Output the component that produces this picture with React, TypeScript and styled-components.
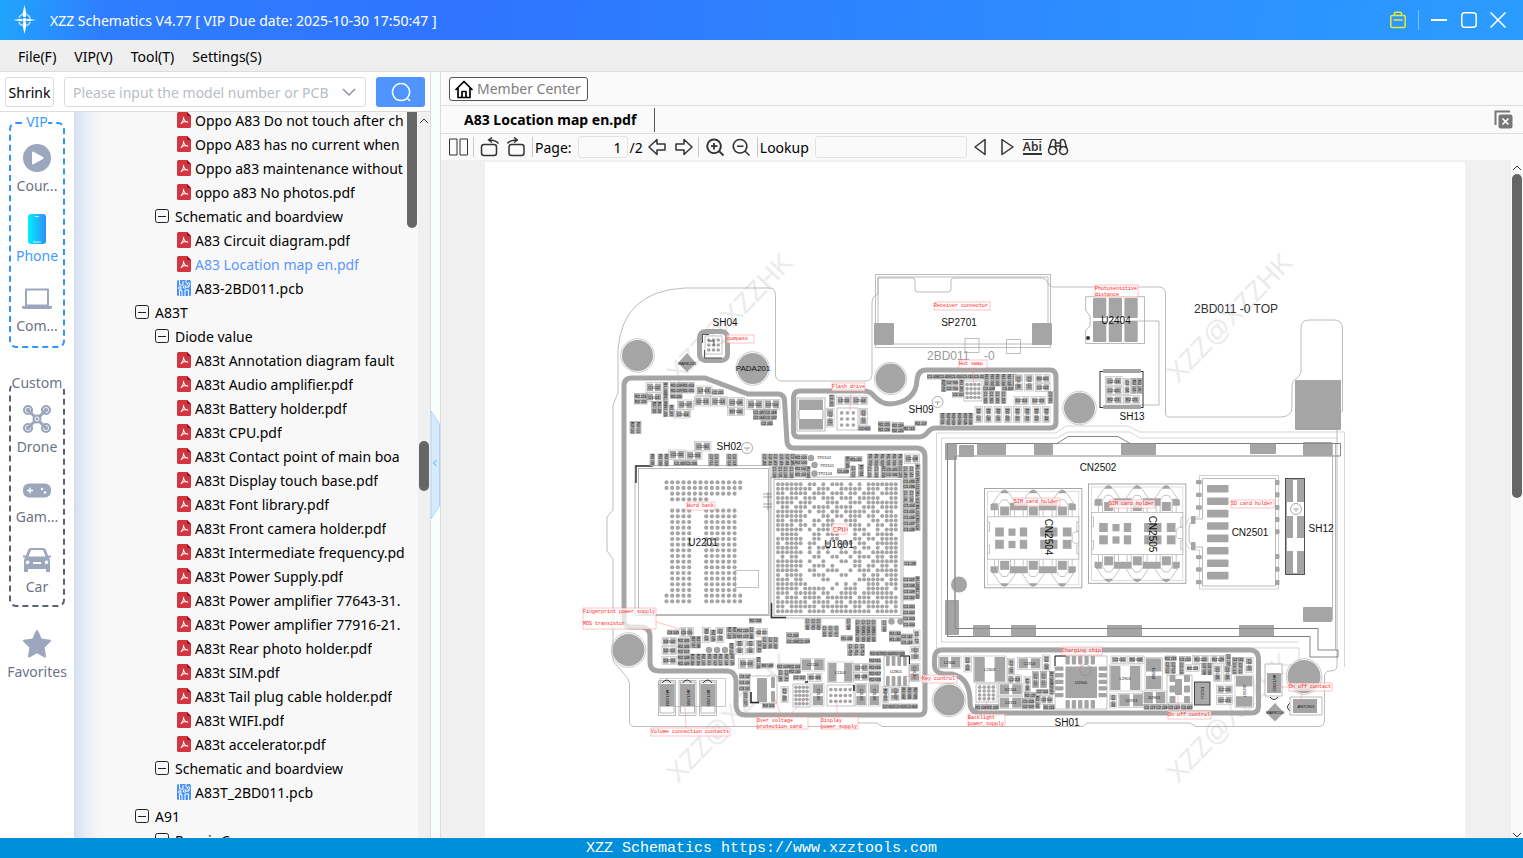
import React from "react";
import styled, { createGlobalStyle, css } from "styled-components";

const GlobalStyle = createGlobalStyle`
  * { box-sizing: border-box; }
  body { margin: 0; background: #fff; }
  body, button, input, select { font-family: "Noto Sans", "Open Sans", sans-serif; font-size: 14px; }
  button { cursor: pointer; }
`;

const ui = {
  line: "#dcdcdc",
  panel: "#fafafa",
  blue: "#4f94ff",
  railIcon: "#9ca6bd",
  railText: "#6c7383",
  footer: "#0090db",
};

/* ---------- window frame ---------- */

const Window = styled.div`
  height: 100vh;
  display: flex;
  flex-direction: column;
  overflow: hidden;
  color: #000;
`;

const TitleBar = styled.header`
  flex: none;
  height: 40px;
  display: flex;
  align-items: center;
  padding: 0 16px 0 12px;
  color: #fff;
  background: linear-gradient(100deg, #1fa6fb 0%, #2f7dff 7%, #2f74ff 30%, #2d8cff 70%, #2b9cff 100%);
`;

const AppTitle = styled.h1`
  flex: 1;
  margin: 0 0 0 12px;
  padding-top: 2px;
  font-size: 14px;
  font-weight: 400;
  line-height: 20px;
`;

const WindowActions = styled.div`
  display: flex;
  align-items: center;
  gap: 12px;
`;

const IconButton = styled.button`
  display: inline-flex;
  align-items: center;
  justify-content: center;
  padding: 0;
  border: 0;
  background: none;
  color: inherit;
`;

const Divider = styled.span<{ $color?: string; $height?: number }>`
  width: 1px;
  height: ${(p) => p.$height ?? 20}px;
  background: ${(p) => p.$color ?? "#c8c8c8"};
`;

const MenuBar = styled.nav`
  flex: none;
  height: 32px;
  display: flex;
  gap: 18px;
  padding: 0 18px;
  background: #efefef;
  border-bottom: 1px solid ${ui.line};
`;

const MenuItem = styled.button`
  padding: 2px 0 0;
  border: 0;
  background: none;
  line-height: 28px;
`;

const Body = styled.main`
  flex: 1;
  min-height: 0;
  display: flex;
`;

const Footer = styled.footer`
  flex: none;
  height: 20px;
  padding-top: 2px;
  background: ${ui.footer};
  color: #fff;
  text-align: center;
  font: 15px/18px "Liberation Mono", monospace;
`;

/* ---------- left side ---------- */

const Side = styled.section`
  flex: none;
  width: 431px;
  display: flex;
  flex-direction: column;
  border-right: 1px solid ${ui.line};
`;

const SearchRow = styled.form`
  flex: none;
  height: 40px;
  display: flex;
  align-items: center;
  padding: 0 5px;
  border-bottom: 1px solid ${ui.line};
`;

const ShrinkButton = styled.button`
  width: 49px;
  height: 30px;
  margin-right: 10px;
  padding: 2px 0 0;
  border: 1px solid ${ui.line};
  border-radius: 3px;
  background: #fff;
`;

const SearchBox = styled.div`
  flex: 1;
  height: 30px;
  display: flex;
  align-items: center;
  margin-right: 10px;
  padding: 0 9px 0 8px;
  border: 1px solid ${ui.line};
  border-radius: 3px;
  color: #8f959e;
`;

const SearchInput = styled.input`
  flex: 1;
  min-width: 0;
  padding: 2px 0 0;
  border: 0;
  outline: 0;
  background: none;
  &::placeholder { color: #b9bdc4; }
`;

const SearchButton = styled.button`
  width: 49px;
  height: 30px;
  display: flex;
  align-items: center;
  justify-content: center;
  border: 0;
  border-radius: 3px;
  background: ${ui.blue};
  color: #fff;
`;

const SideBody = styled.div`
  flex: 1;
  min-height: 0;
  display: flex;
`;

const Rail = styled.nav`
  flex: none;
  width: 74px;
  display: flex;
  flex-direction: column;
  align-items: center;
  padding-top: 10px;
  background: #fff;
`;

const RailGroup = styled.section<{ $active?: boolean }>`
  position: relative;
  width: 56px;
  height: ${(p) => (p.$active ? 226 : 224)}px;
  margin-bottom: ${(p) => (p.$active ? 35 : 20)}px;
  padding-top: 17px;
  border: 2px dashed ${(p) => (p.$active ? "#2f95fb" : "#596171")};
  border-radius: 7px;
  color: ${(p) => (p.$active ? "#3f9bff" : ui.railText)};
`;

const RailLegend = styled.h2`
  position: absolute;
  top: -12px;
  left: 50%;
  transform: translateX(-50%);
  margin: 0;
  background: #fff;
  font-size: 14px;
  font-weight: 400;
  line-height: 20px;
`;

const RailItem = styled.button<{ $active?: boolean }>`
  width: 52px;
  height: 70px;
  display: flex;
  flex-direction: column;
  align-items: center;
  padding: 0;
  border: 0;
  background: none;
  color: ${(p) => (p.$active ? "#3f9bff" : ui.railText)};
  line-height: 20px;
  svg { display: block; height: 34px; margin-bottom: 1px; color: ${ui.railIcon}; }
`;

const TreeArea = styled.div`
  position: relative;
  flex: 1;
  min-width: 0;
  overflow: hidden;
  background: linear-gradient(to right, #d3def0 0, #e9edf5 12px, #f5f6f8 24px, #f8f8f8 34px);
`;

const Tree = styled.ul`
  margin: -4px 12px 0 0;
  padding: 0;
  overflow: hidden;
  list-style: none;
`;

const indents = { model: 61, group: 81, file: 103 };

const TreeRow = styled.li<{ $level: keyof typeof indents; $selected?: boolean }>`
  height: 24px;
  display: flex;
  align-items: center;
  gap: ${(p) => (p.$level === "file" ? 4 : 6)}px;
  padding-left: ${(p) => indents[p.$level]}px;
  white-space: nowrap;
  overflow: hidden;
  color: ${(p) => (p.$selected ? "#5a97fb" : "#000")};
  svg { flex: none; }
`;

const TreeText = styled.span`
  overflow: hidden;
`;

const scrollThumb = css`
  width: 10px;
  border-radius: 5px;
  background: #666;
`;

const TreeThumb = styled.span`
  position: absolute;
  top: -6px;
  right: 1px;
  height: 122px;
  ${scrollThumb}
`;

const ScrollColumn = styled.div<{ $bg: string; $top: number }>`
  flex: none;
  width: 12px;
  display: flex;
  flex-direction: column;
  align-items: center;
  padding-top: ${(p) => p.$top}px;
  overflow: hidden;
  background: ${(p) => p.$bg};
`;

const ScrollSpace = styled.span<{ $grow: number }>`
  flex: ${(p) => p.$grow};
`;

const ScrollThumb = styled.span<{ $grow?: number; $height?: number }>`
  ${scrollThumb}
  ${(p) => (p.$grow ? css`flex: ${p.$grow};` : css`height: ${p.$height}px;`)}
`;

const Splitter = styled.div`
  flex: none;
  width: 10px;
  display: flex;
  justify-content: center;
  background: #fafffb;
  border-right: 1px solid ${ui.line};
`;

const SplitHandle = styled(IconButton)`
  width: 9px;
  height: 110px;
  margin-top: 338px;
`;

/* ---------- document side ---------- */

const Doc = styled.section`
  flex: 1;
  min-width: 0;
  display: flex;
  flex-direction: column;
  background: ${ui.panel};
`;

const DocRow = styled.div<{ $height: number }>`
  flex: none;
  height: ${(p) => p.$height}px;
  display: flex;
  align-items: center;
  padding: 0 10px 0 8px;
  border-bottom: 1px solid ${ui.line};
`;

const MemberButton = styled.button`
  width: 139px;
  height: 24px;
  display: flex;
  align-items: center;
  gap: 3px;
  padding: 0 4px;
  border: 1px solid #555;
  border-radius: 3px;
  background: #fff;
  color: #7d7d7d;
  white-space: nowrap;
  svg { color: #000; }
`;

const Tab = styled.button`
  height: 24px;
  margin-right: auto;
  padding: 0 18px 0 15px;
  border: 0;
  border-right: 1px solid #555;
  background: none;
  font-weight: 700;
`;

const Toolbar = styled.div`
  flex: none;
  height: 26px;
  display: flex;
  align-items: center;
  gap: 6px;
  padding-left: 8px;
  color: #333;
`;

const ToolGroup = styled.div<{ $gap: number }>`
  display: flex;
  align-items: center;
  gap: ${(p) => p.$gap}px;
`;

const ToolLabel = styled.label`
  display: flex;
  align-items: center;
  gap: 6px;
  margin-left: -4px;
  color: #000;
`;

const ToolInput = styled.input<{ $width: number }>`
  width: ${(p) => p.$width}px;
  height: 22px;
  padding: 0 5px;
  border: 1px solid #e3e3e3;
  border-radius: 3px;
  background: #fafafa;
  text-align: right;
`;

const MatchText = styled.span`
  display: block;
  height: 16px;
  border-top: 1px solid #333;
  border-bottom: 2px solid #333;
  font-size: 12px;
  font-weight: 600;
  line-height: 13px;
`;

const Viewer = styled.div`
  flex: 1;
  min-height: 0;
  display: flex;
  background: #f0f0f0;
`;

const Sheet = styled.div`
  flex: 1;
  min-width: 0;
  margin: 2px 46px 0 44px;
  overflow: hidden;
  background: #fff;
  svg { display: block; width: 100%; }
`;

/* ---------- small icons ---------- */

const PdfIcon = () => (
  <svg width="14" height="16" viewBox="0 0 14 16" aria-hidden="true">
    <path d="M1.5 0H10l4 4v10.500a1.500 1.500 0 0 1-1.500 1.500h-11A1.500 1.500 0 0 1 0 14.500v-13A1.500 1.500 0 0 1 1.500 0Z" fill="#d3353e" />
    <path d="M10 0l4 4h-2.500A1.500 1.500 0 0 1 10 2.500Z" fill="#8e1218" />
    <path d="M6.600 5.200c-.3 2 .3 4-2.400 6.500M6.700 6.500c.4 2 2 3.300 4.100 3.600M4.600 10.600c1.400-.8 3-1 4.600-.9" fill="none" stroke="#fff" strokeWidth="1.100" strokeLinecap="round" />
  </svg>
);

const PcbIcon = () => (
  <svg width="14" height="16" viewBox="0 0 14 16" aria-hidden="true">
    <rect width="14" height="16" rx="1.500" fill="#4b93fb" />
    <g fill="none" stroke="#fff" strokeWidth="1">
      <path d="M2.500 0v5h3.500V1M9 0v3.500M2.500 16V10.500h2.500V16M8 16V10h3.500v6M8.800 7H12V5.500" />
      <circle cx="3" cy="8" r="1.300" /><circle cx="7.500" cy="7" r="1.300" /><circle cx="11.500" cy="4" r="1.300" />
    </g>
  </svg>
);

const MinusBox = () => (
  <svg width="14" height="14" viewBox="0 0 14 14" fill="none" stroke="#222" aria-hidden="true">
    <rect x=".5" y=".5" width="13" height="13" rx="2" />
    <path d="M3 7.500h8" />
  </svg>
);

const Caret = ({ down }: { down?: boolean }) => (
  <svg width="12" height="12" viewBox="0 0 12 12" fill="none" stroke="#333" aria-hidden="true">
    <path d={down ? "M2 7l4 4 4-4" : "M2 8l4-4 4 4"} />
  </svg>
);

const Compass = () => (
  <svg width="26" height="32" viewBox="0 0 26 32" fill="#fff" aria-hidden="true">
    <path d="M12.500 1l2 9-.8 3h-2.400l-.8-3ZM12.500 30l2-9-.8-3h-2.400l-.8 3ZM1 16l8-1.300L11 16l-2 1.300ZM24 16l-8-1.300L14 16l2 1.300Z" />
    <circle cx="12.500" cy="16" r="6" fill="none" stroke="#fff" strokeWidth="1.500" strokeDasharray="5 4.400" strokeDashoffset="-2" opacity=".7" />
    <circle cx="12.500" cy="16" r="2" />
  </svg>
);

const DroneIcon = () => (
  <svg width="30" viewBox="-15 -17 30 34" fill="none" stroke="currentColor" aria-hidden="true">
    {[[-9, -9], [9, -9], [-9, 9], [9, 9]].map(([x, y]) => (
      <g key={`${x}${y}`}>
        <circle cx={x} cy={y} r="4.200" fill="currentColor" strokeWidth="1.800" />
        <circle cx={x} cy={y} r="2.600" stroke="#fff" strokeWidth=".8" />
        <path d={`M${x} ${y}L0 0`} strokeWidth="3" />
      </g>
    ))}
    <circle r="4.500" fill="currentColor" stroke="none" />
    <circle r="2" stroke="#fff" strokeWidth=".9" />
  </svg>
);

const PlayIcon = () => (
  <svg width="30" viewBox="-15 -17 30 34" aria-hidden="true">
    <circle r="14" fill="currentColor" />
    <path d="M-5-5.500v11q0 1.500 1.500.8l9.500-5.300q1.500-1 0-2l-9.500-5.300q-1.500-.7-1.500.8Z" fill="#fff" />
  </svg>
);

const PhoneIcon = () => (
  <svg width="30" viewBox="-15 -17 30 34" aria-hidden="true">
    <defs>
      <linearGradient id="phone"><stop stopColor="#00f0ff" /><stop offset="1" stopColor="#2f8dfb" /></linearGradient>
    </defs>
    <rect x="-9" y="-14" width="18" height="30" rx="3" fill="url(#phone)" />
    <path d="M-2-11.500h4M-4 14h8" stroke="#fff" opacity=".8" />
  </svg>
);

const LaptopIcon = () => (
  <svg width="30" viewBox="-15 -17 30 34" aria-hidden="true">
    <path d="M-11-8.500h22v16h-22Z" fill="none" stroke="currentColor" strokeWidth="2" strokeLinejoin="round" />
    <path d="M-15 8H15v1.500q0 1.500-2 1.500H-13q-2 0-2-1.500Z" fill="currentColor" />
  </svg>
);

const PadIcon = () => (
  <svg width="30" viewBox="-15 -17 30 34" aria-hidden="true">
    <rect x="-14" y="-5.500" width="28" height="14" rx="6" fill="currentColor" />
    <path d="M-10 1.500h6M-7-1.500v6" stroke="#fff" strokeWidth="1.500" />
    <circle cx="5" cy="0" r="1.200" fill="#fff" /><circle cx="8" cy="3.500" r="1.200" fill="#fff" />
  </svg>
);

const CarIcon = () => (
  <svg width="30" viewBox="-15 -18 30 34" fill="currentColor" aria-hidden="true">
    <path fillRule="evenodd" d="M-6-12H6q2 0 3 2l2 5.500h3v2h-2q1 1.500 1 3.500V12h-4V9H-9v3h-4V1q0-2 1-3.500h-2v-2h3L-9-10q1-2 3-2ZM-6-10-8.500-3.500h17L6-10ZM-9.500.5a1.800 1.800 0 1 0 .1 0ZM9.500.5a1.800 1.800 0 1 0 .1 0ZM-4 2v2H4V2Z" />
  </svg>
);

const StarIcon = () => (
  <svg width="30" viewBox="-15 -17 30 34" aria-hidden="true">
    <path d="M0-13 4-4.500 13-3.200 6.500 3.200 8 12.500 0 8.200-8 12.500-6.500 3.200-13-3.200-4-4.500Z" fill="currentColor" stroke="currentColor" strokeWidth="2" strokeLinejoin="round" />
  </svg>
);

const Line = ({ w = 20, h = 20, d, sw = 1.5 }: { w?: number; h?: number; d: string; sw?: number }) => (
  <svg width={w} height={h} viewBox={`0 0 ${w} ${h}`} fill="none" stroke="currentColor" strokeWidth={sw} strokeLinejoin="round" aria-hidden="true">
    <path d={d} />
  </svg>
);

/* ---------- board drawing ---------- */

const INK = "#a5a5a5";
const THIN = "#a8a8a8";

const ChipName = styled.text`
  font: 10px "Liberation Sans", sans-serif;
  fill: #111;
  text-anchor: middle;
`;

const PadName = styled(ChipName)`
  font-size: 8px;
`;

const BoardName = styled.text<{ $faint?: boolean }>`
  font: 12px "Liberation Sans", sans-serif;
  fill: ${(p) => (p.$faint ? "#999" : "#333")};
`;

const PartName = styled.text`
  font: 4px "Liberation Sans", sans-serif;
  fill: #111;
  text-anchor: middle;
`;

const NoteText = styled.text<{ $size?: number }>`
  font: ${(p) => p.$size ?? 5}px "Liberation Mono", monospace;
  fill: #f22;
`;

const Watermark = styled.text`
  font: 27px "Liberation Sans", sans-serif;
  fill: #ebebeb;
`;

// Every block of parts is listed in thirds of a unit from its block's origin.
// [x, y, width, height, first label, count, step x, step y]
type Run = [number, number, number, number, string, number?, number?, number?];
type Block = { origin: [number, number]; runs: Run[] };

const blocks: Block[] = [
  {
    origin: [580, 250],
    runs: [
      [198, 398, 48, 28, "C1102"], [198, 428, 48, 26, "C1101"], [163, 431, 38, 14, "R2124", 2, 0, 17],
      [250, 398, 14, 34, "R1104", 3, 0, 34], [215, 455, 14, 35, "R1102", 2, 16], [268, 465, 14, 35, "R1107"],
      [272, 398, 34, 14, "R2418", 3, 0, 17], [308, 398, 34, 14, "R2414", 2, 0, 17],
      [348, 408, 48, 28, "L2101"], [343, 440, 48, 28, "C2113"], [392, 440, 48, 28, "C2114"], [292, 450, 48, 28, "C2107"],
      [284, 480, 48, 24, "C1104"], [396, 419, 34, 14, "C2115"], [443, 443, 50, 28, "C2108"], [443, 472, 50, 25, "R7100"],
      [500, 448, 50, 30, "D2102"], [552, 448, 48, 30, "D2104"], [520, 479, 35, 14, "C2187", 2, 35], [520, 495, 35, 14, "C2166", 2, 35],
      [543, 512, 35, 14, "C2165"], [150, 515, 15, 36, "R2610", 2, 18],
      [343, 575, 50, 28, "C2230"], [266, 600, 50, 28, "C2236"], [318, 603, 48, 26, "C2233"], [282, 632, 34, 14, "C2205", 2, 35],
      [210, 612, 14, 36, "R2201"], [234, 612, 14, 36, "R2202", 2, 18], [386, 612, 14, 36, "C2211", 2, 17], [440, 612, 14, 36, "C2214", 2, 17],
      [546, 612, 14, 34, "C2140", 6, 17], [576, 650, 14, 34, "C1100", 4, 17], [645, 614, 36, 14, "R2102", 4, 0, 17], [678, 650, 12, 34, "R1640"],
      [748, 435, 15, 35, "L2201"], [770, 438, 42, 26, "L2113"], [738, 475, 24, 56, "C3112"],
    ],
  },
  {
    origin: [850, 250],
    runs: [
      [5, 438, 48, 26, "L2104"], [28, 475, 24, 50, "C2110"], [25, 528, 36, 14, "C2805"], [85, 515, 35, 14, "R2125", 2, 0, 16],
      [126, 518, 35, 14, "R2119", 2, 0, 16], [160, 528, 35, 14, "R2115"], [195, 513, 35, 14, "R2107"],
      [232, 373, 34, 14, "C1408", 5, 35], [274, 390, 14, 35, "R2502", 1], [290, 391, 34, 14, "C2709", 2, 0, 17], [308, 427, 34, 14, "C1501"],
      [328, 390, 14, 35, "R1150"], [402, 373, 14, 35, "R2161", 6, 17], [400, 425, 14, 35, "C1300", 4, 18], [400, 408, 34, 14, "C2408"], [456, 408, 34, 14, "C2409"],
      [492, 373, 26, 50, "C2105"], [524, 373, 26, 50, "C2111"], [556, 374, 44, 24, "R2405"], [556, 400, 44, 24, "C2102"],
      [492, 440, 44, 24, "D2114"], [543, 440, 44, 24, "D2113"], [594, 425, 14, 35, "C2901"],
      [375, 470, 22, 48, "D2117", 8, 29], [270, 490, 14, 34, "R2801", 6, 17],
    ],
  },
  {
    origin: [1080, 250],
    runs: [
      [76, 380, 50, 26, "C2118"], [76, 409, 50, 25, "C2105"], [76, 437, 50, 25, "R2121"],
      [131, 385, 20, 48, "C2104"], [155, 385, 14, 45, "R2114", 2, 17], [131, 437, 48, 25, "R2125"],
    ],
  },
  {
    origin: [580, 450],
    runs: [
      [795, 20, 14, 34, "R1645"], [810, 20, 36, 14, "R1611"], [772, 56, 34, 14, "C1408"], [812, 48, 14, 34, "C1611"], [836, 44, 14, 36, "R1604"],
      [863, 12, 14, 35, "R1202", 6, 18], [862, 50, 14, 32, "C1101", 2, 20], [903, 50, 14, 32, "R1104"], [918, 50, 34, 14, "C1105", 2, 0, 17], [953, 50, 14, 32, "C1120"],
      [973, 12, 45, 28, "C2108"], [970, 50, 14, 32, "C1140", 2, 17], [970, 86, 34, 14, "C1435", 2, 0, 17], [970, 122, 14, 34, "C1131", 2, 17],
      [970, 158, 34, 14, "C1104", 5, 0, 18], [1006, 42, 14, 40, "R1410", 5, 0, 40], [972, 333, 36, 14, "C1128"],
      [970, 382, 34, 14, "C1107", 4, 0, 18], [1006, 380, 13, 33, "R1141", 2, 0, 33], [970, 463, 34, 14, "C1401", 4, 0, 18],
      [675, 507, 14, 32, "C1640", 3, 17], [727, 528, 14, 32, "C1615", 3, 17], [798, 507, 14, 32, "C1428"], [826, 510, 14, 32, "C1402", 4, 16], [826, 543, 14, 32, "R1402", 4, 16],
      [783, 557, 34, 16, "R1118"], [803, 582, 14, 35, "C1450", 3, 18], [620, 548, 36, 14, "C2206"], [620, 566, 34, 14, "C2208", 2, 35],
      [905, 512, 14, 32, "C1204"], [928, 543, 34, 14, "R1134", 2, 0, 17], [963, 552, 34, 14, "C1142", 2, 0, 17], [1000, 540, 20, 45, "C1117"],
      [508, 505, 36, 14, "R2158"], [262, 540, 34, 14, "C3103"], [300, 532, 40, 28, "C3110"], [246, 562, 44, 24, "D3102"], [246, 590, 44, 24, "D2101"], [246, 620, 44, 24, "D3101"],
      [294, 564, 34, 14, "R2105", 5, 0, 17], [332, 560, 14, 34, "R2107", 2, 16], [330, 612, 14, 34, "R2108", 8, 17],
      [368, 532, 22, 45, "R2113"], [392, 540, 14, 35, "R2115"], [408, 532, 24, 45, "C2107"], [440, 532, 14, 34, "R2120", 2, 16],
      [472, 534, 34, 14, "R2120", 2, 0, 17], [508, 532, 14, 34, "C2188"], [528, 535, 34, 24, "D2121"], [448, 580, 14, 34, "R2510"], [466, 570, 26, 42, "D2103"], [496, 570, 28, 42, "U2104"], [530, 572, 14, 36, "C3101"],
      [546, 562, 14, 34, "C2180", 3, 17], [476, 626, 48, 30, "D3103"], [528, 622, 14, 34, "R2101"], [545, 640, 34, 14, "R2148"],
      [478, 672, 34, 14, "C3105", 3, 0, 18], [490, 725, 14, 45, "C3107"], [603, 710, 22, 48, "C3106"], [548, 760, 36, 14, "R3101"],
      [592, 642, 34, 14, "R2103", 2, 35], [595, 660, 14, 34, "C2130", 2, 17], [628, 657, 34, 14, "R2147"], [662, 625, 72, 38, "C2116"], [640, 676, 36, 14, "C2112"], [682, 670, 44, 24, "R2183"],
      [696, 700, 36, 68, "C2106"], [742, 636, 78, 62, "L2101"], [826, 700, 34, 68, "C2109"], [866, 700, 34, 68, "C2108"], [820, 640, 46, 26, "C2117"], [820, 668, 46, 24, "R2148"],
      [868, 625, 34, 14, "R2815", 4, 0, 19], [870, 603, 34, 14, "R2807", 3, 35], [990, 590, 30, 40, "C2101"], [988, 640, 32, 55, "C2120"], [906, 710, 20, 48, "R2807"],
      [930, 712, 30, 40, "C2807"], [964, 712, 14, 36, "R2804", 3, 17], [908, 762, 34, 14, "C2802", 3, 35],
    ],
  },
  {
    origin: [920, 630],
    runs: [
      [55, 78, 68, 38, "L2302"], [132, 78, 22, 48, "C2319"], [160, 78, 98, 80, "L2303"], [262, 85, 22, 50, "C2310"], [293, 82, 70, 36, "C2314"], [368, 75, 22, 48, "C2109"],
      [262, 135, 42, 26, "C2113"], [236, 160, 72, 36, "D2101"], [236, 200, 72, 36, "C2311"], [312, 140, 20, 48, "L2304"], [338, 125, 18, 48, "C2116"],
      [362, 125, 18, 48, "C2111"], [388, 125, 14, 34, "R2506", 2, 0, 34], [314, 188, 34, 14, "R2125"], [308, 206, 34, 14, "C2318", 2, 0, 17], [350, 178, 34, 14, "C2104"], [346, 196, 14, 40, "R2102"],
      [362, 196, 36, 26, "U2104"], [166, 224, 34, 14, "R2108", 2, 35], [370, 224, 34, 14, "R2111"], [573, 78, 48, 22, "C2110"], [624, 78, 48, 22, "R2158"], [568, 105, 95, 78, "L2901"],
      [568, 192, 22, 42, "C2102"], [595, 190, 78, 42, "C2913"], [675, 82, 52, 98, "D2904"], [668, 183, 70, 40, "D2901"], [735, 78, 34, 14, "R2131"], [735, 96, 14, 34, "C2912", 2, 17], [778, 80, 34, 14, "C2153"], [778, 98, 14, 34, "C2119"],
      [798, 104, 40, 20, "R2121"], [818, 76, 48, 24, "R2125"], [872, 76, 44, 24, "R2129"], [845, 100, 14, 34, "C2908", 2, 17], [880, 105, 24, 50, "C2105"],
      [910, 105, 24, 50, "C2106"], [918, 74, 14, 32, "C2107"], [937, 82, 34, 14, "C2111"], [937, 98, 14, 34, "C2110", 2, 17], [975, 82, 24, 45, "C2107"], [890, 165, 48, 26, "C2120"], [890, 197, 48, 26, "C2121"],
      [945, 135, 55, 98, "D2907"], [672, 224, 34, 14, "C2117", 2, 36], [745, 224, 34, 14, "C2143"], [783, 224, 34, 14, "C2401"],
    ],
  },
];

const Part = ({ x, y, w, h, name }: { x: number; y: number; w: number; h: number; name: string }) => {
  const short = Math.min(w, h);
  const framed = short > 6;
  const cx = x + w / 2;
  const cy = y + h / 2;
  const upright = h > w * 1.2;
  const pad = framed ? 1 : 0.3;
  const long = Math.max(w, h) - pad * 2;
  const leg = long * (short > 18 ? 0.34 : 0.43);
  return (
    <g>
      <rect x={x} y={y} width={w} height={h} fill={framed ? "#fff" : "#ddd"} stroke={framed ? THIN : "#888"} strokeWidth=".5" />
      {upright ? (
        <>
          <rect x={x + pad} y={y + pad} width={w - pad * 2} height={leg} fill={INK} />
          <rect x={x + pad} y={y + h - pad - leg} width={w - pad * 2} height={leg} fill={INK} />
        </>
      ) : (
        <>
          <rect x={x + pad} y={y + pad} width={leg} height={h - pad * 2} fill={INK} />
          <rect x={x + w - pad - leg} y={y + pad} width={leg} height={h - pad * 2} fill={INK} />
        </>
      )}
      <PartName x={cx} y={cy + 1.5} transform={upright ? `rotate(90 ${cx} ${cy})` : undefined}>{name}</PartName>
    </g>
  );
};

const nextName = (name: string, i: number) => name[0] + (Number(name.slice(1)) + i);

const Parts = () => (
  <>
    {blocks.flatMap(({ origin: [ox, oy], runs }) =>
      runs.flatMap(([x, y, w, h, name, n = 1, dx = 0, dy = 0]) =>
        Array.from({ length: n }, (_, i) => (
          <Part key={`${ox}-${oy}-${x}-${y}-${i}`} x={ox + (x + dx * i) / 3} y={oy + (y + dy * i) / 3} w={w / 3} h={h / 3} name={nextName(name, i)} />
        )),
      ),
    )}
  </>
);

const memoryBalls = [
  "11111111111111", "11111111111111", "01111111111110", "01111111000000", "00000000000000",
  ...Array.from({ length: 15 }, () => "01111001111110"),
  "11111001111111", "11111001111111",
];

const cpuBalls = [
  "111111011010111010101111111", "111111110111001111101110111", "110111101110111011011101111", "111110111011101110111110011",
  "111101110001110011101111111", "011011101111011110011101111", "111111010110110111110110110", "111111100011011011101101111",
  "110111001101100111000110111", "111101101011100011101011011", "111111010111001101110010111", "011110001101110001011011110",
  "111111001100110001101101111", "101111011001001110110011111", "111110010111001001011010111", "111111010101001101100111111",
  "010110001100110010111011011", "111111010010001101100111111", "111111001110100001101101101", "111110011001110010111011111",
  "101111001110001100010110111", "111011000011000000111111011", "111111100000010101001110111", "111110111110100111001111101",
  "111011111011001111011111110", "101110111101111110111011111", "111111101111011011111110111", "110111111011111101101111101", "111111011110111111111011111",
];

const Balls = ({ rows, x, y, pitch, r }: { rows: string[]; x: number; y: number; pitch: number; r: number }) => (
  <g fill={INK}>
    {rows.flatMap((row, j) =>
      [...row].map((c, i) => (c === "1" ? <circle key={`${i}-${j}`} cx={x + i * pitch} cy={y + j * pitch} r={r} /> : null)),
    )}
  </g>
);

const DotGrid = ({ x, y, w, h, cols, rows }: { x: number; y: number; w: number; h: number; cols: number; rows: number }) => (
  <g>
    <rect x={x} y={y} width={w} height={h} fill="#fff" stroke={THIN} strokeWidth=".7" />
    {Array.from({ length: cols * rows }, (_, i) => (
      <circle key={i} cx={x + (w * ((i % cols) + 0.8)) / (cols + 0.6)} cy={y + (h * (Math.floor(i / cols) + 0.8)) / (rows + 0.6)} r="1.800" fill={INK} />
    ))}
  </g>
);

const Pads = ({ list }: { list: number[][] }) => (
  <g fill={INK}>{list.map(([x, y, w, h]) => <rect key={`${x}-${y}`} x={x} y={y} width={w} height={h} rx="1" />)}</g>
);

const SimHolder = ({ x, y }: { x: number; y: number }) => (
  <g transform={`translate(${x} ${y}) scale(.3333)`}>
    <rect width="292" height="298" fill="#fff" stroke={THIN} strokeWidth="3" />
    <rect x="9" y="9" width="274" height="280" fill="none" stroke="#ccc" strokeWidth="2" />
    <path
      d="M18 47 24 44H40V65H18ZM76 43H129V65H76ZM163 43H216V65H163ZM274 47 268 44H252V65H274ZM18 250 24 254H40V233H18ZM76 233H129V254H76ZM163 233H216V254H163ZM274 250 268 254H252V233H274Z"
      fill={INK}
    />
    {[60, 146, 233].map((c) => (
      <g key={c}>
        <path
          d={`M${c - 34} 44 L${c - 14} 14 M${c + 34} 44 L${c + 14} 14 M${c - 18} 85 V50 L${c - 7} 34 H${c + 7} L${c + 18} 50 V85 M${c - 34} 254 L${c - 14} 284 M${c + 34} 254 L${c + 14} 284 M${c - 18} 212 V248 L${c - 7} 264 H${c + 7} L${c + 18} 248 V212 M${c - 30} 65V85M${c + 30} 65V85M${c - 30} 212v20M${c + 30} 212v20`}
          fill="none"
          stroke={THIN}
          strokeWidth="2"
        />
        <path d={`M${c - 14} 14 Q${c} -8 ${c + 14} 14ZM${c - 14} 284 Q${c} 306 ${c + 14} 284Z`} fill={INK} />
        <rect x={c - 13} y="54" width="27" height="27" fill={INK} />
        <rect x={c - 13} y="217" width="27" height="27" fill={INK} />
      </g>
    ))}
    <rect x="9" y="85" width="274" height="127" fill="#fff" stroke={THIN} strokeWidth="2" />
    <g fill={INK}>
      {[117, 154].map((r) => (
        <g key={r}>
          <rect x="32" y={r} width="26" height="27" />
          <rect x="72" y={r + 3} width="21" height="22" />
          <rect x="106" y={r} width="22" height="27" />
          <rect x="167" y={r} width="52" height="27" />
          <rect x="235" y={r} width="26" height="27" />
        </g>
      ))}
    </g>
    <path d="M9 100h6v28H9M9 170h6v26H9M283 100h-6v28h6M283 170h-6v26h6M283 130h-12l-8 8v20l6 6h14" fill="none" stroke={THIN} strokeWidth="2" />
  </g>
);

// [x, y, box width, lines]
const notes: [number, number, number, string[]][] = [
  [727, 335, 27, ["compass"]],
  [832, 383, 33, ["Flash drive"]],
  [934, 302, 56, ["Receiver connector"]],
  [959, 360, 28, ["Hot swap"]],
  [1095, 285, 43, ["Photosensitive", "distance"]],
  [687, 502, 28, ["Word bank"]],
  [583, 608, 73, ["Fingerprint power supply", "", "MOS transistor"]],
  [651, 728, 79, ["Volume connection contacts"]],
  [757, 717, 51, ["Over voltage", "protection card"]],
  [821, 717, 37, ["Display", "power supply"]],
  [922, 675, 35, ["Key control"]],
  [968, 714, 37, ["Backlight", "power supply"]],
  [1062, 647, 40, ["Charging chip"]],
  [1168, 711, 43, ["On off control"]],
  [1289, 683, 43, ["On off contact"]],
  [1014, 498, 46, ["SIM card holder"]],
  [1109, 500, 46, ["SIM card holder"]],
  [1231, 500, 43, ["SD card holder"]],
];

const names: [number, number, string, number?][] = [
  [725, 326, "SH04"], [729, 450, "SH02"], [959, 326, "SP2701"], [921, 413, "SH09"], [1132, 420, "SH13"],
  [1116, 324, "U2404"], [703, 546, "U2201"], [839, 548, "U1601"], [1098, 471, "CN2502"], [1250, 536, "CN2501"],
  [1321, 532, "SH12"], [1067, 726, "SH01"], [1045, 537, "CN2504", 90], [1149, 534, "CN2505", 90],
];

const Board = () => (
  <svg viewBox="485 162 980 676" role="img" aria-label="A83 component location map">
    {[[678, 384], [1178, 384], [678, 784], [1178, 784]].map(([x, y]) => (
      <Watermark key={`${x}-${y}`} x={x} y={y} transform={`rotate(-46 ${x} ${y})`}>XZZ@XZZHK</Watermark>
    ))}

    <g fill="none" stroke="#a0a0a0" strokeWidth=".7">
      <path d="M618 393V350Q622 291 685 288H770Q775 288 775.500 295V375Q776 381 782 381H866Q872 381 872 374V303Q872 296 878 294V278H912Q915 278 915 281V289Q915 292 918 292H948Q951 292 951 289V281Q951 278 954 278H1042Q1046 278 1048 283 1050 287 1053 287H1160Q1165 288 1165.500 294V412Q1165 417 1170 417H1282Q1292 416 1292 407V385Q1292 381 1297 378 1301 375 1301 371V328Q1301 320 1309 320H1334Q1342 320 1342.500 328V411L1337 417V666Q1337 671 1330 671 1325 671 1324.500 676V721Q1324 726 1319 726.500H1196L1190 723H1087L1083 726.500H882L877 723H858L854 726.500H634Q629 726 629.500 720V684Q629 678 624 674L613 661V559L607 551V517L613 510V405Z" />
      <path d="M875.500 274.500H1050.500V347.500H875.500ZM878 277H1048V344H878Z" />
      <path d="M965 338.500h14v14h-14ZM1006.500 339.500h14v14h-14ZM1130.500 321H1159V405H1130.500" />
      <path d="M936.500 654V433H1056L1066 426H1128L1140 432H1344.500V667M941.500 642V438H1057L1068 432H1130L1140 438H1338M936.500 648H1299V672M941 642H1298" stroke="#c4c4c4" />
    </g>

    <g fill="none" stroke="#686868" strokeWidth=".8">
      <path d="M947.500 443.500H1057L1068 436.500H1118L1130 443.500H1340.500V456H955V628.500H1318V650H1338V657H1310V636.500H947.500Z" />
      <path d="M1332.500 444V620M1335.500 444V650" stroke={THIN} />
    </g>

    <g fill="none" stroke={INK} strokeWidth="5">
      <path d="M624 620V386Q624 378 632 378H705L748 394H779Q784 395 784.500 400L787 442Q788 448 794 448H916Q925 448 925 457V709Q925 715 919 715H745Q737 715 736 706V680Q735 671 727 671H659Q650 671 650 662V637Q650 627 641 627H631Q624 627 624 620Z" />
      <path d="M793.500 432V397Q794 391 800 391H864Q870 391 874 396 881 404 890 404 916 402 917 380 918 370 926 370H1050Q1056 370 1056 377V422Q1056 428 1050 428H936Q931 428 928 432 924 437 919 437H799Q793.500 437 793.500 432Z" />
      <path d="M942 650H1251Q1258 651 1258.500 658V707Q1258 713 1252 713H980Q971 713 970 704 971 678 952 674H944Q935 673 934.500 666V658Q935 650 942 650Z" />
      <rect x="699.500" y="331.500" width="28" height="29" rx="6" />
    </g>

    <g fill={INK}>
      {[[637.5, 355.5, 15.5], [752.7, 368.5, 15.5], [890.5, 378.5, 15], [1079.5, 408, 15.5], [628.5, 650, 16], [949, 700, 15.5], [1304, 676.5, 16.5]].map(([x, y, r]) => (
        <g key={x}>
          <circle cx={x} cy={y} r={r} />
          <circle cx={x} cy={y} r={r + 1.3} fill="none" stroke={THIN} strokeWidth=".6" />
        </g>
      ))}
      <circle cx="959" cy="584.500" r="8" />
      <path d="M687 353l9 10-9 9-9-9ZM1275 703l9 9.500-9 9-9-9Z" />
    </g>

    <Pads
      list={[
        [874, 323, 20, 22], [1032, 323, 20, 22], [1295, 380, 46, 50],
        [945, 443, 12, 17], [959, 445, 15, 12], [977, 443, 29, 12], [1034, 443, 19, 12], [1121, 443, 35, 12], [1250, 443, 26, 11], [1303, 442, 29, 14],
        [945, 600, 14, 35], [973, 625, 17, 12], [1011, 625, 25, 12], [1107, 625, 35, 12], [1239, 625, 35, 12], [1303, 607, 29, 15],
      ]}
    />
    <path d="M947.500 443.500H1340M955 456V628.500H1318M947.500 443V636.500H1310" fill="none" stroke="#777" strokeWidth=".6" />

    <g fill="#fff" stroke={THIN} strokeWidth=".8">
      <rect x="635" y="465.500" width="135" height="150" />
      <rect x="638.500" y="468.500" width="130" height="146" />
      <rect x="771" y="477" width="132" height="141" />
      <rect x="774" y="479.500" width="127" height="136" />
    </g>
    <path d="M636 483V466H653M771.500 603V617.500H786" fill="none" stroke="#333" strokeWidth="1.500" />
    <Balls rows={memoryBalls} x={666.5} y={482.3} pitch={5.67} r={2.1} />
    <Balls rows={cpuBalls} x={778} y={484.3} pitch={4.53} r={2} />
    <path d="M763 494h9M763 497h9M763 504h9M763 507h9M768 492v18" stroke="#777" strokeWidth=".7" />
    <rect x="735.500" y="570.500" width="23" height="17" fill="none" stroke={THIN} strokeWidth=".7" />

    <Parts />

    <DotGrid x={705} y={336} w={17} h={18} cols={3} rows={3} />
    <path d="M702.500 343V334.500H709M722 358H704.500V350M708 341h6M714 341v5" fill="none" stroke="#555" />
    <g>
      <rect x="797" y="398" width="28" height="33" fill="#fff" stroke={THIN} strokeWidth=".8" />
      <path d="M799 399.500h24v10.500h-24ZM799 419h24v10.500h-24Z" fill={INK} />
      <path d="M799 410v9M823 410v9" stroke={THIN} />
    </g>
    <DotGrid x={837} y={408} w={21} h={22} cols={3} rows={3} />
    <DotGrid x={964} y={381} w={18} h={20} cols={4} rows={4} />
    <DotGrid x={976} y={684} w={21} h={18} cols={4} rows={4} />
    <DotGrid x={793} y={684} w={17} h={23} cols={4} rows={5} />
    <DotGrid x={827} y={685} w={27} h={21} cols={5} rows={3} />

    <g fill="none" stroke={THIN} strokeWidth=".8">
      <path d="M1085.700 296.700H1144.500V343.500H1085.700V330L1090 326V316L1085.700 310Z" />
    </g>
    <Pads list={[0, 1, 2].flatMap((i) => [[1093 + i * 15.7, 298, 13.3, 20], [1093 + i * 15.7, 321, 13.3, 21]])} />
    <circle cx="1088" cy="338" r="2" fill="#333" />
    <rect x="1100" y="371.500" width="43" height="36" fill="none" stroke="#333" />
    <Pads list={[[1103, 369, 38, 4], [1103, 405, 38, 4]]} />

    <g fill="#fff" stroke={THIN} strokeWidth=".7"><rect x="750" y="676" width="27" height="27" /></g>
    <Pads list={[[757, 678, 10, 24], [771, 677, 4, 11], [771, 691, 4, 11]]} />
    <path d="M751 692V702.500H759M808 682h-3M854 685V691" fill="none" stroke="#222" strokeWidth="1.500" />
    <rect x="884" y="656" width="25" height="30" fill="#fff" stroke={THIN} strokeWidth=".7" />
    <Pads list={[0, 1, 2, 3].flatMap((i) => [[886 + i * 5.7, 656, 3.7, 10], [886 + i * 5.7, 676, 3.7, 10]])} />
    <path d="M900 656H909.500V664" fill="none" stroke="#222" />
    <PartName x="896" y="673">U2801</PartName>

    {[0, 1, 2].map((i) => (
      <g key={i}>
        <path d={`M${658.5 + i * 20.5} 680.500h17v35h-17ZM${660 + i * 20.5} 682h14v31h-14Z`} fill="#fff" stroke={THIN} strokeWidth=".8" />
        <rect x={659.5 + i * 20.5} y="684" width="15" height="22" fill={INK} />
        <path d={`M${662 + i * 20.5} 683q5-6 9 0`} fill="none" stroke="#333" />
        <PartName x={667 + i * 20.5} y={699} transform={`rotate(90 ${667 + i * 20.5} 698)`}>{`ANT290${4 + i}`}</PartName>
      </g>
    ))}
    <rect x="660" y="678.500" width="65.500" height="28" fill="none" stroke={THIN} strokeWidth=".6" />

    <g>
      <rect x="1055" y="656" width="52" height="53" fill="#fff" stroke={THIN} strokeWidth=".7" />
      <rect x="1065.500" y="666.500" width="31.500" height="31.500" fill={INK} />
      <Pads list={[0, 1, 2, 3, 4].flatMap((i) => [[1065.5 + i * 6.3, 656, 4.3, 8.5], [1065.5 + i * 6.3, 700, 4.3, 8.5], [1055, 666.5 + i * 6.6, 8.5, 4.3], [1098.5, 666.5 + i * 6.6, 8.5, 4.3]])} />
      <path d="M1055 666V656H1066" fill="none" stroke="#222" />
      <circle cx="1085.500" cy="670" r="5.500" fill="none" stroke="#888" strokeWidth=".6" />
      <PartName x="1081" y="684">U2900</PartName>
    </g>
    <rect x="1167" y="675" width="25" height="28" fill="#fff" stroke={THIN} strokeWidth=".7" />
    <Pads list={[0, 1, 2].flatMap((i) => [[1169.5, 675 + i * 10.5, 6, 7], [1184, 675 + i * 10.5, 6, 7]])} />
    <Pads list={[[1175, 679, 7, 16]]} />
    <rect x="1194.500" y="682" width="15.500" height="23" fill="#aaa" stroke="#222" strokeWidth=".8" />
    <PartName x="1202" y="694" transform="rotate(90 1202 693)">DG211</PartName>

    <g>
      <path d="M1265 664h17v32h-17Z" fill="#fff" stroke={THIN} strokeWidth=".8" />
      <rect x="1267" y="673" width="14" height="20" fill={INK} />
      <PartName x="1274" y="684" transform="rotate(90 1274 683)">ANT2902</PartName>
      <path d="M1270 697q4 5 8 0M1290 703q-5 4 0 8" fill="none" stroke="#333" />
      <path d="M1290 697h32v18h-32Z" fill="#fff" stroke={THIN} strokeWidth=".8" />
      <rect x="1293" y="699" width="24" height="14" fill={INK} />
      <PartName x="1306" y="707.500">ANT2903</PartName>
      <PartName x="1275" y="714">MARK200</PartName>
      <PartName x="687" y="364.500">MARK201</PartName>
    </g>

    <SimHolder x={984.5} y={488.5} />
    <SimHolder x={1088.5} y={484} />

    <g fill="#fff" stroke={THIN} strokeWidth=".8">
      <path d="M1199.500 475.500H1278.500V589H1199.500V550H1193Q1186 548 1186 540V526Q1187 518 1193 517H1199.500Z" stroke="#c4c4c4" />
      <path d="M1202.500 478.500H1275.500V586H1202.500V547H1196Q1189 546 1189 539V528Q1190 520 1196 519H1202.500Z" />
    </g>
    <Pads
      list={[
        ...Array.from({ length: 8 }, (_, i) => [1207, 485 + i * 12.4, 21.5, 7.6]),
        ...[150, 188, 226, 375, 412, 450].map((y) => [1196, 430 + y / 3, 5.7, 4.3]),
        ...[150, 187, 225, 261, 298, 372, 410, 450].map((y) => [1275, 430 + y / 3, 4.5, 5]),
        [1191, 516, 4.5, 8], [1191, 542, 4.5, 8],
      ]}
    />

    <g>
      <rect x="1285.500" y="478.500" width="19" height="96" fill={INK} stroke="#444" strokeWidth=".9" />
      <path d="M1293 480h4v22h7v14h-7v22h7v13h-7v22h-4v-22h-6v-13h6v-22h-6v-14h6Z" fill="#fff" />
    </g>
    {[[747, 448, 5.5], [937.5, 402, 5.5], [1296, 509, 5.5]].map(([x, y, r]) => (
      <g key={x} fill="#fff" stroke="#888" strokeWidth=".7">
        <circle cx={x} cy={y} r={r} />
        <path d={`M${x - 3} ${y}h6m-3 0v3`} />
      </g>
    ))}
    <g fill={INK} stroke="#888" strokeWidth=".4">
      {[[811, 458], [814.5, 465], [814.5, 473.5], [709, 650], [717, 650], [725, 650], [891.5, 621.5], [900.5, 621.5]].map(([x, y]) => (
        <circle key={`${x}-${y}`} cx={x} cy={y} r="3" />
      ))}
    </g>
    {([[824, 459, "TP2102"], [827, 467, "TP2101"], [825, 475, "TP2103"]] as [number, number, string][]).map(([x, y, t]) => (
      <PartName key={t} x={x} y={y}>{t}</PartName>
    ))}

    {names.map(([x, y, t, turn]) => (
      <ChipName key={t} x={x} y={y} transform={turn ? `rotate(${turn} ${x} ${y})` : undefined}>{t}</ChipName>
    ))}
    <PadName x="753" y="371">PADA201</PadName>
    <BoardName x="1194" y="313">2BD011 -0 TOP</BoardName>
    <BoardName $faint x="927" y="360">2BD011</BoardName>
    <BoardName $faint x="984" y="360">-0</BoardName>

    <g fill="none" stroke="#f88" strokeWidth=".5">
      <path d="M727 340l-9 5M851 391l-1 20M972 368l2 17M653 621l27 8M685 706l1 22M773 695l9 22M808 695l-20 22M837 700l0 17M905 676l17 2M987 700l-1 14M1081 655l-1 15M1178 695l0 16M1276 687h13M1302 690l-1 12" />
      {notes.map(([x, y, w, lines]) => (
        <rect key={`${x}-${y}`} x={x} y={y} width={w} height={lines.length > 2 ? 21 : lines.length > 1 ? 12 : 8} fill="#fff" fillOpacity=".7" />
      ))}
      <rect x="832" y="524" width="15" height="10" fill="#fff" fillOpacity=".7" />
    </g>
    {notes.flatMap(([x, y, , lines]) =>
      lines.map((t, i) => (t ? <NoteText key={`${x}-${y}-${i}`} x={x} y={y + 5 + i * 6}>{t}</NoteText> : null)),
    )}
    <NoteText $size={7} x="833" y="532">CPU</NoteText>
  </svg>
);

/* ---------- tree data ---------- */

type Node = { level: keyof typeof indents; name: string; selected?: boolean };

const files = (...list: string[]): Node[] => list.map((name) => ({ level: "file", name, selected: name === "A83 Location map en.pdf" }));

const nodes: Node[] = [
  ...files("Oppo A83 Do not touch after ch", "Oppo A83 has no current when", "Oppo a83 maintenance without", "oppo a83 No photos.pdf"),
  { level: "group", name: "Schematic and boardview" },
  ...files("A83 Circuit diagram.pdf", "A83 Location map en.pdf", "A83-2BD011.pcb"),
  { level: "model", name: "A83T" },
  { level: "group", name: "Diode value" },
  ...files(
    "A83t Annotation diagram fault", "A83t Audio amplifier.pdf", "A83t Battery holder.pdf", "A83t CPU.pdf",
    "A83t Contact point of main boa", "A83t Display touch base.pdf", "A83t Font library.pdf", "A83t Front camera holder.pdf",
    "A83t Intermediate frequency.pd", "A83t Power Supply.pdf", "A83t Power amplifier 77643-31.", "A83t Power amplifier 77916-21.",
    "A83t Rear photo holder.pdf", "A83t SIM.pdf", "A83t Tail plug cable holder.pdf", "A83t WIFI.pdf", "A83t accelerator.pdf",
  ),
  { level: "group", name: "Schematic and boardview" },
  ...files("A83T_2BD011.pcb"),
  { level: "model", name: "A91" },
  { level: "group", name: "Repair Cases" },
];

export default function App() {
  return (
    <Window>
      <GlobalStyle />
      <TitleBar>
        <Compass />
        <AppTitle>XZZ Schematics V4.77 [ VIP Due date: 2025-10-30 17:50:47 ]</AppTitle>
        <WindowActions>
          <IconButton aria-label="Toolbox">
            <svg width="16" height="18" viewBox="0 0 16 18" fill="none" stroke="#e3e63c" strokeWidth="1.500" aria-hidden="true">
              <rect x=".8" y="4.500" width="14.400" height="12" rx="1.500" />
              <path d="M4.500 4.500v-2q0-1.200 1.200-1.200h4.600q1.200 0 1.200 1.200v2M3.500 9h9" />
            </svg>
          </IconButton>
          <Divider $color="#7fbfff" />
          <IconButton aria-label="Minimize"><Line w={16} h={16} d="M0 8h16" sw={2} /></IconButton>
          <IconButton aria-label="Maximize">
            <svg width="18" height="16" viewBox="-2 0 18 16" fill="none" stroke="#fff" strokeWidth="1.500" aria-hidden="true"><rect x=".8" y=".8" width="14.400" height="14.400" rx="3" /></svg>
          </IconButton>
          <IconButton aria-label="Close"><Line w={18} h={16} d="M1.500.5l15 15m0-15-15 15" /></IconButton>
        </WindowActions>
      </TitleBar>
      <MenuBar>
        {["File(F)", "VIP(V)", "Tool(T)", "Settings(S)"].map((t) => <MenuItem key={t}>{t}</MenuItem>)}
      </MenuBar>

      <Body>
        <Side>
          <SearchRow onSubmit={(e) => e.preventDefault()}>
            <ShrinkButton type="button">Shrink</ShrinkButton>
            <SearchBox>
              <SearchInput aria-label="Model number or PCB" placeholder="Please input the model number or PCB" />
              <Line w={14} h={10} d="M1 2l6 6 6-6" />
            </SearchBox>
            <SearchButton aria-label="Search">
              <Line w={20} h={20} d="M10 1.500a8.500 8.500 0 1 0 .1 0M16 16l3 3" />
            </SearchButton>
          </SearchRow>
          <SideBody>
            <Rail>
              <RailGroup $active>
                <RailLegend>VIP</RailLegend>
                <RailItem><PlayIcon />Cour...</RailItem>
                <RailItem $active><PhoneIcon />Phone</RailItem>
                <RailItem><LaptopIcon />Com...</RailItem>
              </RailGroup>
              <RailGroup>
                <RailLegend>Custom</RailLegend>
                <RailItem><DroneIcon />Drone</RailItem>
                <RailItem><PadIcon />Gam...</RailItem>
                <RailItem><CarIcon />Car</RailItem>
              </RailGroup>
              <RailItem><StarIcon />Favorites</RailItem>
            </Rail>
            <TreeArea>
              <Tree>
                {nodes.map((n, i) => (
                  <TreeRow key={i} $level={n.level} $selected={n.selected}>
                    {n.level !== "file" ? <MinusBox /> : n.name.endsWith(".pcb") ? <PcbIcon /> : <PdfIcon />}
                    <TreeText>{n.name}</TreeText>
                  </TreeRow>
                ))}
              </Tree>
              <TreeThumb />
            </TreeArea>
            <ScrollColumn $bg="#f0f0f0" $top={3}>
              <Caret />
              <ScrollSpace $grow={314} />
              <ScrollThumb $height={50} />
              <ScrollSpace $grow={347} />
            </ScrollColumn>
          </SideBody>
        </Side>
        <Splitter>
          <SplitHandle aria-label="Collapse panel">
            <svg width="9" height="110" viewBox="0 0 9 110" fill="none" aria-hidden="true">
              <path d="M0 1 8.500 14V96L0 109Z" fill="#d7ebff" stroke="#a9d5fb" />
              <path d="M5.500 50 2.500 53l3 3" stroke="#4fa9e8" />
            </svg>
          </SplitHandle>
        </Splitter>
        <Doc>
          <DocRow $height={34}>
            <MemberButton>
              <Line w={20} h={20} d="M1.500 11 10 2.500 18.500 11M4 9v9.500h12V9M8 18v-5.500h4V18" sw={1.7} />
              Member Center
            </MemberButton>
          </DocRow>
          <DocRow $height={28}>
            <Tab>A83 Location map en.pdf</Tab>
            <IconButton aria-label="Close all tabs">
              <svg width="19" height="19" viewBox="0 0 19 19" fill="none" aria-hidden="true">
                <path d="M1.500 15V1.500H16" stroke="#777" strokeWidth="2" />
                <rect x="4.500" y="4.500" width="14" height="14" rx="2" fill="#777" />
                <path d="M8.500 8.500l6 6m0-6-6 6" stroke="#fff" strokeWidth="1.700" />
              </svg>
            </IconButton>
          </DocRow>
          <Toolbar>
            <ToolGroup $gap={5}>
              <IconButton aria-label="Two pages"><Line w={19} h={18} d="M.5 1h7.500v16H.5ZM11 1h7.500v16H11Z" sw={1} /></IconButton>
              <Divider />
            </ToolGroup>
            <ToolGroup $gap={6}>
              <IconButton aria-label="Rotate left">
                <Line d="M4 7.500h10q2.500 0 2.500 2.500v6q0 2.500-2.500 2.500H4Q1.500 18.500 1.500 16v-6Q1.500 7.500 4 7.500ZM18.500 6.500Q16 3 9 3M12 .5 8.500 3 12 5.500" />
              </IconButton>
              <IconButton aria-label="Rotate right">
                <Line d="M5.500 7.500h10Q18 7.500 18 10v6q0 2.500-2.500 2.500h-10Q3 18.500 3 16v-6q0-2.500 2.500-2.500ZM1.500 6.500Q4 3 11 3M8 .5 11.500 3 8 5.500" />
              </IconButton>
              <Divider />
            </ToolGroup>
            <ToolLabel>Page:<ToolInput $width={50} defaultValue="1" /></ToolLabel>
            <ToolGroup $gap={5}>
              <ToolLabel as="span">/2</ToolLabel>
              <IconButton aria-label="Previous page"><Line d="M1 10 9 2.500V7h8v6H9v4.500Z" /></IconButton>
              <IconButton aria-label="Next page"><Line d="M19 10 11 2.500V7H3v6h8v4.500Z" /></IconButton>
              <Divider />
            </ToolGroup>
            <ToolGroup $gap={6}>
              <IconButton aria-label="Zoom in"><Line d="M9 2.500a6.800 6.800 0 1 0 .1 0M14 14l4.500 4.500M9 6v6.500M6 9.200h6.500" sw={1.8} /></IconButton>
              <IconButton aria-label="Zoom out"><Line d="M9 2.500a6.800 6.800 0 1 0 .1 0M14 14l4.500 4.500M6 9.200h6.500" /></IconButton>
              <Divider />
            </ToolGroup>
            <ToolLabel>Lookup<ToolInput $width={152} /></ToolLabel>
            <ToolGroup $gap={5}>
              <IconButton aria-label="Find previous"><Line d="M12 2.500V17.500L2 10Z" /></IconButton>
              <IconButton aria-label="Find next"><Line d="M4 2.500V17.500L15 10Z" /></IconButton>
              <IconButton aria-label="Match text"><MatchText>Abi</MatchText></IconButton>
              <IconButton aria-label="Search document">
                <Line w={22} d="M2 12 4.500 3.500Q6.500 1.500 8.500 3.500V13M20 12 17.500 3.500Q15.500 1.500 13.500 3.500V13M5.500 9.500a4 4 0 1 0 .1 0M16.500 9.500a4 4 0 1 0 .1 0M8.500 6h5M8.500 9h5" />
              </IconButton>
            </ToolGroup>
          </Toolbar>
          <Viewer>
            <Sheet><Board /></Sheet>
            <ScrollColumn $bg="#fafafa" $top={2}>
              <Caret />
              <ScrollThumb $grow={325} />
              <ScrollSpace $grow={329} />
              <Caret down />
            </ScrollColumn>
          </Viewer>
        </Doc>
      </Body>
      <Footer>XZZ Schematics https://www.xzztools.com</Footer>
    </Window>
  );
}
